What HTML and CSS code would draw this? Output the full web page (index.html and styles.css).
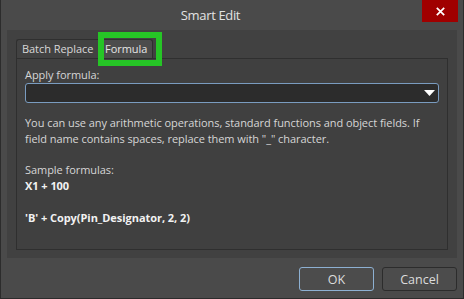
FILE: index.html
```html
<!DOCTYPE html>
<html>
<head>
<meta charset="utf-8">
<link rel="stylesheet" href="styles.css">
</head>
<body>
<div class="window">
  <div class="titlebar">
    <div class="title">Smart Edit</div>
    <button class="close" aria-label="Close">
      <svg width="9" height="9" viewBox="0 0 9 9"><path d="M0.8 0.8 L8.2 8.2 M8.2 0.8 L0.8 8.2" stroke="#ffffff" stroke-width="1.7"/></svg>
    </button>
  </div>
  <div class="body">
    <div class="tabs">
      <div class="tab">Batch Replace</div>
      <div class="tab active">Formula</div>
    </div>
    <div class="panel">
      <div class="label">Apply formula:</div>
      <div class="combo">
        <svg class="arrow" width="11" height="6" viewBox="0 0 11 6"><path d="M0 0 H11 L5.5 6 Z" fill="#ffffff"/></svg>
      </div>
      <p class="help">You can use any arithmetic operations, standard functions and object fields. If<br>field name contains spaces, replace them with "_" character.</p>
      <div class="sample-title">Sample formulas:</div>
      <div class="sample">X1 + 100</div>
      <div class="sample second">'B' + Copy(Pin_Designator, 2, 2)</div>
    </div>
  </div>
  <div class="footer">
    <button class="btn primary">OK</button>
    <button class="btn">Cancel</button>
  </div>
  <div class="highlight"></div>
</div>
</body>
</html>
```

FILE: styles.css
```css
* { box-sizing: border-box; }
html, body {
  margin: 0;
  padding: 0;
  width: 464px;
  height: 299px;
  overflow: hidden;
  background: #4a4a4a;
}
.window {
  position: relative;
  width: 464px;
  height: 299px;
  background: #4a4a4a;
  border: 1px solid #2c2c2c;
  border-top: none;
  display: flex;
  flex-direction: column;
  font-family: "Open Sans", "Noto Sans", sans-serif;
  font-size: 11px;
  letter-spacing: -0.05px;
  color: #d6d6d6;
}
.titlebar {
  height: 30px;
  flex: none;
  display: flex;
  align-items: flex-start;
}
.title {
  flex: 1;
  text-align: center;
  line-height: 30px;
  font-size: 13px;
  letter-spacing: -0.35px;
  color: #e2e2e2;
  padding-right: 2px;
}
.close {
  flex: none;
  width: 36px;
  height: 22px;
  margin-right: 5px;
  border: none;
  padding: 0;
  background: #a00000;
  display: flex;
  align-items: center;
  justify-content: center;
}
.body {
  flex: none;
  height: 228px;
  margin: 0 6px;
  background: #414141;
  padding: 9px 9px 8px 9px;
  display: flex;
  flex-direction: column;
}
.tabs {
  display: flex;
  height: 19px;
  flex: none;
}
.tab {
  height: 19px;
  width: 85px;
  padding: 0 0 0 5px;
  line-height: 18px;
  color: #d8d8d8;
  border-top: 1px solid #2f2f2f;
  border-left: 1px solid #2f2f2f;
  border-radius: 3px 0 0 0;
  background: #424242;
  white-space: nowrap;
}
.tab.active {
  width: 52px;
  background: #4c4c4c;
  border-right: 1px solid #2f2f2f;
  border-radius: 0 3px 0 0;
  padding: 0 0 0 3px;
  color: #e6e6e6;
}
.panel {
  flex: 1;
  border: 1px solid #2f2f2f;
  background: #404040;
  padding: 8px 8px 0 8px;
}
.label {
  line-height: 16px;
}
.combo {
  height: 20px;
  border: 1px solid #7a9cc0;
  border-radius: 3px;
  background: #2c2c2c;
  display: flex;
  align-items: center;
  justify-content: flex-end;
  padding-right: 3px;
}
.help {
  margin: 12px 0 0 0;
  line-height: 16px;
  white-space: nowrap;
}
.sample-title {
  margin-top: 15px;
  line-height: 16px;
}
.sample {
  line-height: 16px;
  font-weight: bold;
  color: #f2f2f2;
}
.sample.second {
  margin-top: 16px;
}
.footer {
  flex: 1;
  display: flex;
  justify-content: flex-end;
  align-items: flex-start;
  gap: 8px;
  padding: 9px 6px 0 0;
}
.btn {
  width: 75px;
  height: 24px;
  border: 1px solid #2c2c2c;
  border-radius: 3px;
  background: #4c4c4c;
  color: #dcdcdc;
  font-family: "Open Sans", "Noto Sans", sans-serif;
  font-size: 12.5px;
  padding: 0;
}
.btn.primary {
  border-color: #8db0d2;
}
.highlight {
  position: absolute;
  left: 97px;
  top: 32px;
  width: 64px;
  height: 34px;
  border: 6px solid #26c526;
}
```
